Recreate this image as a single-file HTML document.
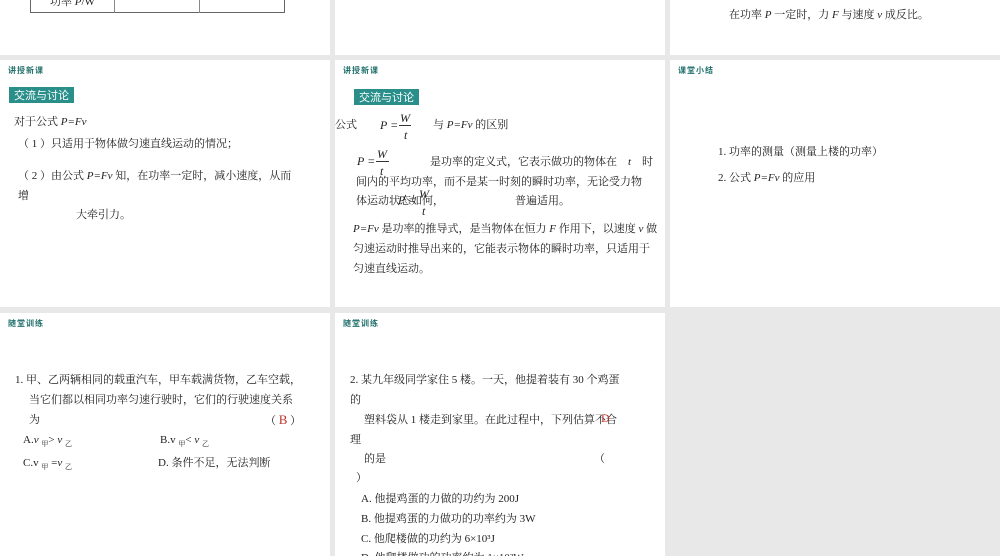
<!DOCTYPE html>
<html style="width:1000px;height:556px;overflow:hidden"><head><meta charset="utf-8"><style>
*{margin:0;padding:0;box-sizing:border-box}
body{width:1000px;height:556px;background:#e8e8e8;position:relative;overflow:hidden;font-family:"Liberation Serif","Noto Serif CJK SC",serif;font-size:11px;color:#222}
.p{position:absolute;background:#fff}
.t{position:absolute;white-space:nowrap;line-height:1}
.h{position:absolute;font-family:"Noto Sans CJK SC",sans-serif;font-weight:bold;font-size:8px;color:#1f6f6a;letter-spacing:1px}
.tag{position:absolute;background:#2a8f8a;color:#fff;font-family:"Noto Sans CJK SC",sans-serif;font-size:11px;padding:1px 5px;line-height:14px}
i{font-style:italic}
.fr{position:absolute;font-style:italic;font-size:12px}
</style></head><body>
<div class="p" style="left:0;top:0;width:330px;height:55px"></div>
<div class="p" style="left:335px;top:0;width:330px;height:55px"></div>
<div class="p" style="left:670px;top:0;width:330px;height:55px"></div>
<div class="p" style="left:0;top:60px;width:330px;height:247px"></div>
<div class="p" style="left:335px;top:60px;width:330px;height:247px"></div>
<div class="p" style="left:670px;top:60px;width:330px;height:247px"></div>
<div class="p" style="left:0;top:313px;width:330px;height:243px"></div>
<div class="p" style="left:335px;top:313px;width:330px;height:243px"></div>

<div style="position:absolute;left:30px;top:-10px;width:255px;height:23px;border:1px solid #666;border-top:none"></div>
<div style="position:absolute;left:114px;top:0;width:1px;height:13px;background:#888"></div>
<div style="position:absolute;left:199px;top:0;width:1px;height:13px;background:#888"></div>
<div class="t" style="left:50px;top:-3px">功率 <i>P</i>/W</div>
<div class="t" style="left:729px;top:10px">在功率 <i>P</i> 一定时，力 <i>F</i> 与速度 <i>v</i> 成反比。</div>

<div class="h" style="left:8px;top:65px">讲授新课</div>
<div class="tag" style="left:9px;top:87px">交流与讨论</div>
<div class="t" style="left:14px;top:117px">对于公式 <i>P=Fv</i></div>
<div class="t" style="left:18px;top:139px">（ 1 ）只适用于物体做匀速直线运动的情况；</div>
<div class="t" style="left:18px;top:171px">（ 2 ）由公式 <i>P=Fv</i> 知，在功率一定时，减小速度，从而</div>
<div class="t" style="left:18px;top:191px">增</div>
<div class="t" style="left:76px;top:210px">大牵引力。</div>

<div class="h" style="left:343px;top:65px">讲授新课</div>
<div class="tag" style="left:354px;top:89px">交流与讨论</div>
<div class="t" style="left:335px;top:120px">公式</div>
<div class="fr" style="left:380px;top:118px">P =</div>
<div class="fr" style="left:400px;top:111px">W</div>
<div style="position:absolute;left:399px;top:125px;width:12px;height:1px;background:#333"></div>
<div class="fr" style="left:404px;top:128px">t</div>
<div class="t" style="left:433px;top:120px">与 <i>P=Fv</i> 的区别</div>
<div class="fr" style="left:357px;top:154px">P =</div>
<div class="fr" style="left:377px;top:147px">W</div>
<div style="position:absolute;left:376px;top:161px;width:13px;height:1px;background:#333"></div>
<div class="fr" style="left:380px;top:164px">t</div>
<div class="t" style="left:430px;top:157px">是功率的定义式，它表示做功的物体在　<i>t</i>　时</div>
<div class="t" style="left:356px;top:177px">间内的平均功率，而不是某一时刻的瞬时功率，无论受力物</div>
<div class="t" style="left:356px;top:196px">体运动状态如何，</div>
<div class="fr" style="left:398px;top:193px">P =</div>
<div class="fr" style="left:419px;top:187px">W</div>
<div class="fr" style="left:422px;top:204px">t</div>
<div class="t" style="left:515px;top:196px">普遍适用。</div>
<div class="t" style="left:353px;top:224px"><i>P=Fv</i> 是功率的推导式，是当物体在恒力 <i>F</i> 作用下，以速度 <i>v</i> 做</div>
<div class="t" style="left:353px;top:244px">匀速运动时推导出来的，它能表示物体的瞬时功率，只适用于</div>
<div class="t" style="left:353px;top:264px">匀速直线运动。</div>

<div class="h" style="left:678px;top:65px">课堂小结</div>
<div class="t" style="left:718px;top:147px">1. 功率的测量（测量上楼的功率）</div>
<div class="t" style="left:718px;top:173px">2. 公式 <i>P=Fv</i> 的应用</div>

<div class="h" style="left:8px;top:318px">随堂训练</div>
<div class="t" style="left:15px;top:375px">1.  甲、乙两辆相同的载重汽车，甲车载满货物，乙车空载，</div>
<div class="t" style="left:29px;top:395px">当它们都以相同功率匀速行驶时，它们的行驶速度关系</div>
<div class="t" style="left:29px;top:415px">为</div>
<div class="t" style="left:265px;top:413px">（  <span style="color:#c0302a;font-size:13px">B</span>  ）</div>
<div class="t" style="left:23px;top:435px">A.<i>v</i> <sub style="font-size:7px">甲</sub>&gt; <i>v</i> <sub style="font-size:7px">乙</sub></div>
<div class="t" style="left:160px;top:435px">B.v <sub style="font-size:7px">甲</sub>&lt; <i>v</i> <sub style="font-size:7px">乙</sub></div>
<div class="t" style="left:23px;top:458px">C.v <sub style="font-size:7px">甲</sub> =<i>v</i> <sub style="font-size:7px">乙</sub></div>
<div class="t" style="left:158px;top:458px">D.  条件不足，无法判断</div>

<div class="h" style="left:343px;top:318px">随堂训练</div>
<div class="t" style="left:350px;top:375px">2.  某九年级同学家住 5 楼。一天，他提着装有 30 个鸡蛋</div>
<div class="t" style="left:350px;top:395px">的</div>
<div class="t" style="left:364px;top:415px">塑料袋从 1 楼走到家里。在此过程中，下列估算不合</div>
<div class="t" style="left:601px;top:412px;color:#c0302a;font-size:12px">D</div>
<div class="t" style="left:350px;top:435px">理</div>
<div class="t" style="left:364px;top:454px">的是</div>
<div class="t" style="left:594px;top:454px">（</div>
<div class="t" style="left:356px;top:473px">）</div>
<div class="t" style="left:361px;top:494px">A.  他提鸡蛋的力做的功约为 200J</div>
<div class="t" style="left:361px;top:514px">B.  他提鸡蛋的力做功的功率约为 3W</div>
<div class="t" style="left:361px;top:534px">C.  他爬楼做的功约为 6×10³J</div>
<div class="t" style="left:361px;top:553px">D.  他爬楼做功的功率约为 1×10²W</div>
</body></html>
